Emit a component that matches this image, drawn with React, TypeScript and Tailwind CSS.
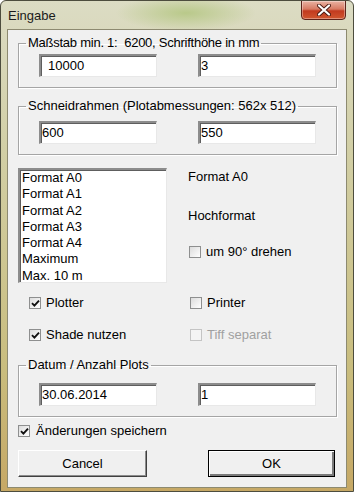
import type { ReactNode } from "react";

const FORMATS = [
  "Format A0",
  "Format A1",
  "Format A2",
  "Format A3",
  "Format A4",
  "Maximum",
  "Max. 10 m",
];

const sunken =
  "bg-white border-t-2 border-l-2 border-t-[#8c8c8c] border-l-[#8c8c8c] border-b border-r border-b-[#e8e8e8] border-r-[#e8e8e8] shadow-[inset_1px_1px_0_#5e5e5e]";

function Field({ value, pad = "pl-[1px]" }: { value: string; pad?: string }) {
  return (
    <div className={`${sunken} w-[118px] h-[23px] flex items-center ${pad}`}>
      {value}
    </div>
  );
}

function Check({
  checked,
  disabled,
  children,
  gap = "gap-[5px]",
}: {
  checked?: boolean;
  disabled?: boolean;
  children: ReactNode;
  gap?: string;
}) {
  return (
    <div className={`flex items-center h-[16px] ${gap}`}>
      <span
        className={`w-[12px] h-[12px] border flex items-center justify-center ${
          disabled
            ? "border-[#c4c4c4] bg-[#f4f4f4]"
            : "border-[#8e8f8f] bg-[linear-gradient(135deg,#dcdcdc,#ffffff)]"
        }`}
      >
        {checked && (
          <svg width="9" height="9" viewBox="0 0 9 9">
            <path d="M1 4.2 L3.4 6.6 L8 1.6" fill="none" stroke="#111" strokeWidth="1.9" />
          </svg>
        )}
      </span>
      <span className={disabled ? "text-[#a0a0a0]" : ""}>{children}</span>
    </div>
  );
}

function Group({
  label,
  top,
  tight,
  children,
}: {
  label: string;
  top: string;
  tight?: boolean;
  children: ReactNode;
}) {
  return (
    <fieldset className="border border-[#a5a5a5] shadow-[inset_1px_1px_0_#fff,1px_1px_0_#fff] w-[319px] ml-[10px] pb-[10px]">
      <legend
        className={`ml-[7px] px-[2px] leading-[16px] whitespace-pre ${
          tight ? "tracking-[-0.25px]" : ""
        }`}
      >
        {label}
      </legend>
      <div className={`flex gap-[41px] pl-[20px] ${top}`}>{children}</div>
    </fieldset>
  );
}

export default function App() {
  return (
    <div
      className="w-[354px] h-[492px] rounded-t-[6px] border border-[#4d4d3e] bg-[radial-gradient(ellipse_70px_18px_at_185px_12px,#b9c98a,transparent),linear-gradient(180deg,#dcdcc4_0%,#d2cfa6_30%,#c9bd7e_75%,#c6a865_100%)] text-[13px] text-black overflow-hidden"
      style={{ fontFamily: '"Liberation Sans", Arial, sans-serif' }}
    >
      <div className="h-[28px] flex justify-between items-start">
        <span className="pl-[7px] pt-[7px] leading-[16px] text-[#1b1b1b]">Eingabe</span>
        <button
          type="button"
          className="w-[45px] h-[20px] mr-[7px] -mt-px rounded-b-[4px] border border-[#5d231a] bg-[linear-gradient(180deg,#eab3a3_0%,#d77a63_45%,#c23a1f_55%,#d0562f_100%)] flex items-center justify-center shadow-[inset_0_0_0_1px_rgba(255,255,255,0.35)]"
        >
          <svg width="14" height="12" viewBox="0 0 14 12">
            <path d="M2 1.5 L12 10.5 M12 1.5 L2 10.5" stroke="#4a1a12" strokeWidth="4" strokeLinecap="round" />
            <path d="M2 1.5 L12 10.5 M12 1.5 L2 10.5" stroke="#fff" strokeWidth="2.2" strokeLinecap="round" />
          </svg>
        </button>
      </div>

      <div className="mx-[6px] border border-[#8d8a70] bg-[#f0f0f0] pb-[10px]">
        <div className="pt-[5px]">
          <Group label="Maßstab min. 1:  6200, Schrifthöhe in mm" top="mt-[3px]" tight>
            <Field value="10000" pad="pl-[7px]" />
            <Field value="3" />
          </Group>
        </div>

        <div className="mt-[10px]">
          <Group label="Schneidrahmen (Plotabmessungen: 562x 512)" top="mt-[7px]">
            <Field value="600" />
            <Field value="550" />
          </Group>
        </div>

        <div className="mt-[13px] ml-[10px] flex gap-[21px]">
          <div className={`${sunken} w-[149px] h-[115px] pl-[2px] leading-[16.3px]`}>
            {FORMATS.map((f) => (
              <div key={f}>{f}</div>
            ))}
          </div>
          <div className="flex flex-col leading-[16px]">
            <span className="mt-[1px]">Format A0</span>
            <span className="mt-[23px]">Hochformat</span>
            <div className="mt-[20px] pl-px">
              <Check>um 90° drehen</Check>
            </div>
          </div>
        </div>

        <div className="mt-[12px] ml-[10px] grid grid-cols-[171px_1fr] gap-y-[16px]">
          <div className="pl-[11px]">
            <Check checked>Plotter</Check>
          </div>
          <div className="pl-px">
            <Check>Printer</Check>
          </div>
          <div className="pl-[11px]">
            <Check checked>Shade nutzen</Check>
          </div>
          <div className="pl-px">
            <Check disabled>Tiff separat</Check>
          </div>
        </div>

        <div className="mt-[14px]">
          <Group label="Datum / Anzahl Plots" top="mt-[10px]">
            <Field value="30.06.2014" />
            <Field value="1" />
          </Group>
        </div>

        <div className="mt-[6px] ml-[10px]">
          <Check checked gap="gap-[6px]">
            Änderungen speichern
          </Check>
        </div>

        <div className="mt-[11px] ml-[10px] flex gap-[61px]">
          <button
            type="button"
            className="w-[129px] h-[27px] bg-[#f0f0f0] border border-t-white border-l-white border-b-[#404040] border-r-[#404040] shadow-[inset_-1px_-1px_0_#8c8c8c]"
          >
            Cancel
          </button>
          <button
            type="button"
            className="w-[127px] h-[27px] bg-[#f0f0f0] border border-black shadow-[inset_1px_1px_0_#fff,inset_-2px_-2px_0_#7a7a7a]"
          >
            OK
          </button>
        </div>
      </div>
    </div>
  );
}
